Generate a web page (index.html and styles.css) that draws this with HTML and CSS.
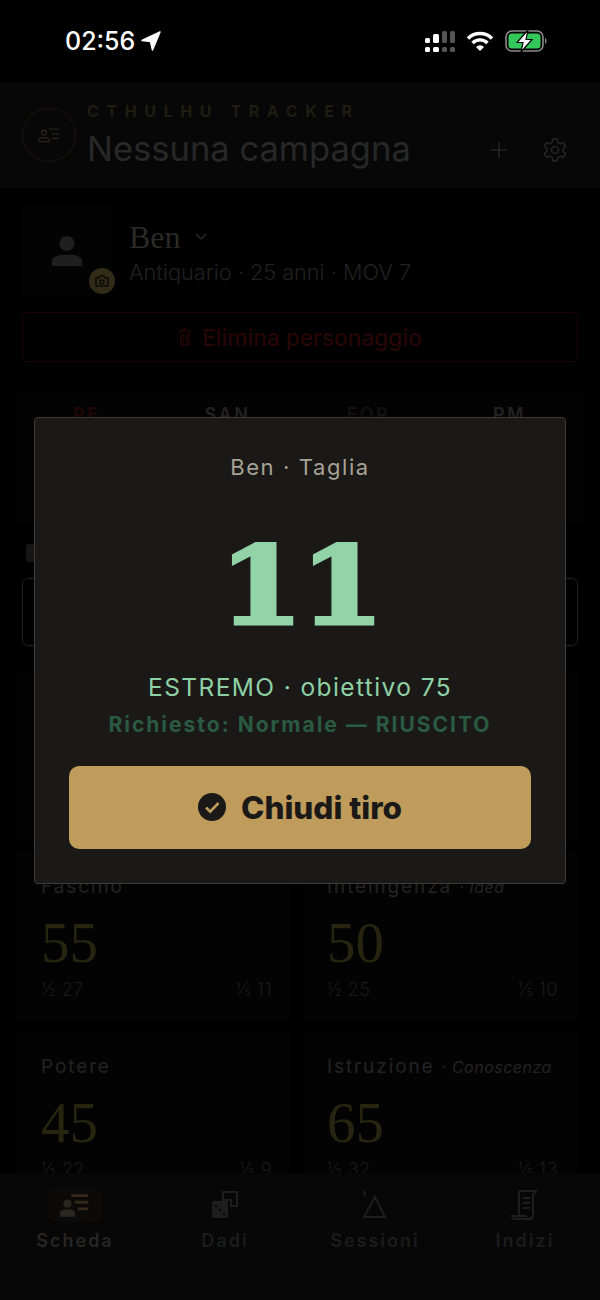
FILE: index.html
```html
<!DOCTYPE html>
<html lang="it">
<head>
  <meta charset="UTF-8" />
  <title>Cthulhu Tracker</title>
  <link rel="stylesheet" href="styles.css">
</head>
<body>

<div id="app">
  <!-- Status bar -->
  <div class="status-bar">
    <div class="status-time">
      <span>02:56</span>
      <svg width="20" height="20" viewBox="0 0 20 20"><path d="M19 1 1 9.500 9.500 10.500 11.500 19Z" fill="#fff" stroke="#fff" stroke-width="1.500" stroke-linejoin="round"/></svg>
    </div>
    <div class="status-icons">
      <svg width="31" height="21" viewBox="0 0 31 21">
        <g fill="#fff">
          <rect x="1" y="7" width="5" height="5" rx="1.500"/><rect x="1" y="16" width="5" height="5" rx="1.500"/>
          <rect x="9" y="3" width="6" height="9" rx="1.500"/><rect x="9" y="16" width="6" height="5" rx="1.500"/>
        </g>
        <g fill="#555">
          <rect x="18" y="0" width="5" height="12" rx="1.500"/><rect x="18" y="16" width="5" height="5" rx="1.500"/>
          <rect x="26" y="0" width="5" height="12" rx="1.500"/><rect x="26" y="16" width="5" height="5" rx="1.500"/>
        </g>
      </svg>
      <svg width="28" height="22" viewBox="0 0 28 22" fill="none" stroke="#fff" stroke-width="3.400">
        <path d="M2 8.500a17 17 0 0 1 24 0"/>
        <path d="M6.500 13a10.500 10.500 0 0 1 15 0"/>
        <path d="M14 21l-4-4a5.500 5.500 0 0 1 8 0z" fill="#fff" stroke="none"/>
      </svg>
      <svg width="43" height="22" viewBox="0 0 43 22">
        <rect x="1" y="1" width="37" height="20" rx="6" fill="none" stroke="#8a8a8a" stroke-width="1.600"/>
        <rect x="3.500" y="3.500" width="32" height="15" rx="3.500" fill="#34c759"/>
        <path d="M40 8c2 .5 2 5.500 0 6z" fill="#8a8a8a"/>
        <path d="M23 0 12 12.500h6L16 22l11-12.500h-6z" fill="#fff" stroke="#000" stroke-width="1.200"/>
      </svg>
    </div>
  </div>

  <!-- Header -->
  <header class="top-bar">
    <div class="logo-ring">
      <svg width="24" height="20" viewBox="0 0 28 24" fill="none" stroke="#2c2619" stroke-width="1.500">
        <circle cx="8" cy="9" r="3"/>
        <path d="M2 20v-2c0-2 2-3 6-3s6 1 6 3v2z"/>
        <path d="M14 5h12M17 11h9M17 16h9"/>
      </svg>
    </div>
    <div class="top-titles">
      <div class="eyebrow">CTHULHU TRACKER</div>
      <div class="campaign">Nessuna campagna</div>
    </div>
    <div class="top-actions">
      <svg width="20" height="20" viewBox="0 0 20 20" stroke="#242424" stroke-width="1.500"><path d="M10 2v16M2 10h16"/></svg>
      <svg width="26" height="26" viewBox="0 0 24 24" fill="none" stroke="#242424" stroke-width="1.500">
        <circle cx="12" cy="12" r="3.200"/>
        <path d="M10 2h4l.6 3 2.400 1.300 2.800-1 2 3.400-2.200 2 0 2.600 2.200 2-2 3.400-2.800-1-2.400 1.300-.6 3h-4l-.6-3-2.400-1.300-2.800 1-2-3.400 2.200-2 0-2.600-2.200-2 2-3.400 2.800 1L9.400 5z"/>
      </svg>
    </div>
  </header>

  <main class="sheet">
    <section class="character">
      <div class="portrait">
        <svg width="34" height="34" viewBox="0 0 36 36" fill="#1f1f1f">
          <circle cx="18" cy="10" r="8"/>
          <path d="M2 34v-5c0-5 6-7 16-7s16 2 16 7v5z"/>
        </svg>
        <div class="camera-badge">
          <svg width="14" height="12" viewBox="0 0 14 12" fill="none" stroke="#0b0a06" stroke-width="1.500"><path d="M1 3h3l1-2h4l1 2h3v8H1z"/><circle cx="7" cy="7" r="2"/></svg>
        </div>
      </div>
      <div>
        <div class="char-name">
          <span>Ben</span>
          <svg width="12" height="8" viewBox="0 0 12 8" fill="none" stroke="#272727" stroke-width="1.500"><path d="M1 1l5 5 5-5"/></svg>
        </div>
        <div class="char-sub">Antiquario · 25 anni · MOV 7</div>
      </div>
    </section>

    <div class="delete-btn">
      <svg width="14" height="18" viewBox="0 0 14 18" fill="none" stroke="#240606" stroke-width="1.500"><path d="M1 3h12M3 3v14h8V3M5 1h4M5.500 6v8M8.500 6v8"/></svg>
      <span>Elimina personaggio</span>
    </div>

    <div class="vitals">
      <div class="vital vital-red">PF</div>
      <div class="vital">SAN</div>
      <div class="vital vital-faint">FOR</div>
      <div class="vital">PM</div>
    </div>

    <div class="skill-head">
      <svg width="10" height="18" viewBox="0 0 10 18" fill="#161616"><rect width="10" height="18" rx="3"/></svg>
    </div>
    <div class="skill-box"></div>

    <div class="char-grid">
      <div class="char-card"></div>
      <div class="char-card"></div>
      <div class="char-card">
        <div class="char-label">Fascino</div>
        <div class="char-value">55</div>
        <div class="char-split"><span>½ 27</span><span>⅕ 11</span></div>
      </div>
      <div class="char-card">
        <div class="char-label">Intelligenza <small>· <em>Idea</em></small></div>
        <div class="char-value">50</div>
        <div class="char-split"><span>½ 25</span><span>⅕ 10</span></div>
      </div>
      <div class="char-card">
        <div class="char-label">Potere</div>
        <div class="char-value">45</div>
        <div class="char-split"><span>½ 22</span><span>⅕ 9</span></div>
      </div>
      <div class="char-card">
        <div class="char-label">Istruzione <small>· <em>Conoscenza</em></small></div>
        <div class="char-value">65</div>
        <div class="char-split"><span>½ 32</span><span>⅕ 13</span></div>
      </div>
    </div>
  </main>

  <!-- Tabs -->
  <nav class="tabs">
    <div class="tab tab-active">
      <div class="tab-icon">
        <svg width="30" height="25" viewBox="0 0 32 26" fill="#2a2620">
          <circle cx="8" cy="11" r="4.500"/>
          <path d="M0 25v-3c0-4 3-5 8-5s8 1 8 5v3z"/>
          <path d="M12 1h18v3H12zM16 8h14v3H16zM19 15h11v3H19z" fill="#33291a"/>
        </svg>
      </div>
      <span>Scheda</span>
    </div>
    <div class="tab">
      <div class="tab-icon">
        <svg width="28" height="30" viewBox="0 0 28 30" fill="#1e1e1e">
          <rect x="1" y="11" width="16" height="17" rx="2"/>
          <path d="M12 2h14v14h-6v-6h-8z" fill="none" stroke="#1e1e1e" stroke-width="2"/>
          <g fill="#070707"><circle cx="5" cy="16" r="1.300"/><circle cx="9" cy="20" r="1.300"/><circle cx="13" cy="24" r="1.300"/></g>
        </svg>
      </div>
      <span>Dadi</span>
    </div>
    <div class="tab">
      <div class="tab-icon">
        <svg width="28" height="30" viewBox="0 0 28 30" fill="none" stroke="#1e1e1e" stroke-width="2">
          <path d="M14 7 24 27H3z"/>
          <path d="M3 1l1 5"/>
        </svg>
      </div>
      <span>Sessioni</span>
    </div>
    <div class="tab">
      <div class="tab-icon">
        <svg width="28" height="32" viewBox="0 0 28 32" fill="none" stroke="#1e1e1e" stroke-width="2">
          <path d="M8 2h17l-3 4v20c0 3-2 4-4 4H4c-2 0-3-2-3-3h15"/>
          <path d="M8 2v24M12 9h7M12 14h7M12 19h7"/>
        </svg>
      </div>
      <span>Indizi</span>
    </div>
  </nav>

  <!-- Roll result -->
  <div class="scrim">
    <div class="roll-modal">
      <div class="roll-title">Ben · Taglia</div>
      <div class="roll-number">11</div>
      <div class="roll-result">ESTREMO · obiettivo 75</div>
      <div class="roll-required">Richiesto: Normale — RIUSCITO</div>
      <button class="roll-close">
        <svg width="28" height="28" viewBox="0 0 28 28">
          <circle cx="14" cy="14" r="14" fill="#1a1917"/>
          <path d="M8 14.500l4.200 4.200L20.500 10" fill="none" stroke="#bf9c5b" stroke-width="2.600"/>
        </svg>
        <span>Chiudi tiro</span>
      </button>
    </div>
  </div>
</div>

</body>
</html>
```

FILE: styles.css
```css
* {
  box-sizing: border-box;
}

body {
  margin: 0;
  background: #000;
  font-family: "Inter", "Liberation Sans", sans-serif;
}

#app {
  position: relative;
  display: flex;
  flex-direction: column;
  width: 600px;
  height: 1300px;
  overflow: hidden;
  background: #000;
}

/* status bar */
.status-bar {
  display: flex;
  flex: none;
  justify-content: space-between;
  align-items: center;
  height: 82px;
  padding: 0 52px 0 65px;
}

.status-time {
  display: flex;
  align-items: center;
  gap: 6px;
  color: #fff;
  font-size: 25px;
  font-weight: 500;
}

.status-icons {
  display: flex;
  align-items: center;
  gap: 11px;
}

/* header */
.top-bar {
  display: flex;
  flex: none;
  align-items: center;
  height: 106px;
  padding: 0 32px 0 22px;
  background: #070707;
}

.logo-ring {
  display: flex;
  flex: none;
  justify-content: center;
  align-items: center;
  width: 54px;
  height: 54px;
  margin-right: 11px;
  border: 1px solid #1c170d;
  border-radius: 50%;
}

.top-titles {
  flex: 1;
}

.eyebrow {
  color: #201c12;
  font-size: 16px;
  font-weight: 700;
  letter-spacing: 7.600px;
  line-height: 20px;
}

.campaign {
  margin-top: 8px;
  color: #282828;
  font-size: 34.500px;
  line-height: 40px;
}

.top-actions {
  display: flex;
  align-items: center;
  gap: 33px;
  padding-top: 30px;
}

/* main sheet */
.sheet {
  flex: 1;
  min-height: 0;
  overflow: hidden;
  padding: 0 22px;
}

.character {
  display: flex;
  align-items: center;
  gap: 17px;
  height: 124px;
  padding-top: 2px;
}

.portrait {
  position: relative;
  display: flex;
  flex: none;
  justify-content: center;
  align-items: center;
  width: 90px;
  height: 90px;
  background: #030303;
}

.camera-badge {
  position: absolute;
  right: -3px;
  bottom: 2px;
  display: flex;
  justify-content: center;
  align-items: center;
  width: 26px;
  height: 26px;
  border-radius: 50%;
  background: #312c18;
}

.char-name {
  display: flex;
  align-items: center;
  gap: 14px;
  color: #2c2a26;
  font-family: "Liberation Serif", serif;
  font-size: 32px;
  line-height: 40px;
}

.char-sub {
  margin-top: 2px;
  color: #212121;
  font-size: 21.700px;
  font-weight: 300;
  line-height: 26px;
}

.delete-btn {
  display: flex;
  justify-content: center;
  align-items: center;
  gap: 10px;
  height: 50px;
  border: 1px solid #160404;
  border-radius: 4px;
  color: #260606;
  font-size: 22.700px;
  font-weight: 500;
}

.vitals {
  display: grid;
  grid-template-columns: repeat(4, 141px);
  height: 130px;
  margin: 30px -6px 0;
  padding: 12px 0 0;
  background: #030303;
}

.vital {
  color: #222;
  font-size: 18px;
  font-weight: 600;
  letter-spacing: 2.500px;
  text-align: center;
}

.vital-red {
  color: #200606;
}

.vital-faint {
  color: #141010;
}

.skill-head {
  height: 26px;
  margin-top: 22px;
  padding-left: 4px;
}

.skill-box {
  height: 68px;
  margin-top: 8px;
  border: 1px solid #202020;
  border-radius: 6px;
}

.char-grid {
  display: grid;
  grid-template-columns: 275px 273px;
  grid-auto-rows: 167px;
  gap: 13px 15px;
  margin: 27px 0 0 -7px;
}

.char-card {
  padding: 22px 18px 0 26px;
  background: #030303;
}

.char-card:nth-child(even) {
  padding: 22px 20px 0 22px;
}

.char-label {
  color: #232323;
  font-size: 19px;
  letter-spacing: 1.900px;
  line-height: 24px;
}

.char-label small {
  font-size: 16px;
  letter-spacing: .500px;
}

.char-value {
  margin-top: 12px;
  color: #272410;
  font-family: "Liberation Serif", serif;
  font-size: 57px;
  line-height: 64px;
}

.char-split {
  display: flex;
  justify-content: space-between;
  margin-top: 3px;
  color: #1a1a1a;
  font-size: 18px;
  font-weight: 300;
  letter-spacing: .500px;
  line-height: 24px;
}

/* tabs */
.tabs {
  display: grid;
  flex: none;
  grid-template-columns: repeat(4, 150px);
  height: 127px;
  background: #070707;
}

.tab {
  display: flex;
  flex-direction: column;
  align-items: center;
  padding-top: 15px;
  color: #1c1c1c;
  font-size: 18px;
  font-weight: 600;
  letter-spacing: 2px;
  line-height: 24px;
}

.tab-icon {
  display: flex;
  justify-content: center;
  align-items: center;
  width: 54px;
  height: 34px;
  margin-bottom: 7px;
}

.tab-active {
  color: #262626;
}

.tab-active .tab-icon {
  border-radius: 8px;
  background: #0c0a08;
}

/* roll modal */
.scrim {
  position: absolute;
  inset: 0;
  display: flex;
  justify-content: center;
  align-items: center;
}

.roll-modal {
  display: flex;
  flex-direction: column;
  align-items: center;
  width: 532px;
  height: 467px;
  padding: 34px 34px 0;
  border: 1px solid #3c3b36;
  border-radius: 4px;
  background: #1a1917;
}

.roll-title {
  color: #a8a294;
  font-size: 22px;
  letter-spacing: 1.600px;
  line-height: 30px;
}

.roll-number {
  height: 148px;
  margin-top: 41px;
  color: #92d3a7;
  font-family: "DejaVu Serif", serif;
  font-size: 108px;
  font-weight: 700;
  letter-spacing: -3.500px;
  line-height: 127px;
  -webkit-text-stroke: 3px #92d3a7;
  transform: scaleX(1.13);
}

.roll-result {
  color: #8fd0a4;
  font-size: 24.500px;
  letter-spacing: 1.400px;
  line-height: 32px;
}

.roll-required {
  margin-top: 8px;
  color: #2a5a42;
  font-size: 21px;
  font-weight: 700;
  letter-spacing: 2px;
  line-height: 28px;
}

.roll-close {
  display: flex;
  justify-content: center;
  align-items: center;
  gap: 15px;
  width: 100%;
  height: 83px;
  margin-top: 27px;
  border: 0;
  border-radius: 10px;
  background: #bf9c5b;
  color: #1a1917;
  font-family: inherit;
  font-size: 31.500px;
  font-weight: 800;
}
```
